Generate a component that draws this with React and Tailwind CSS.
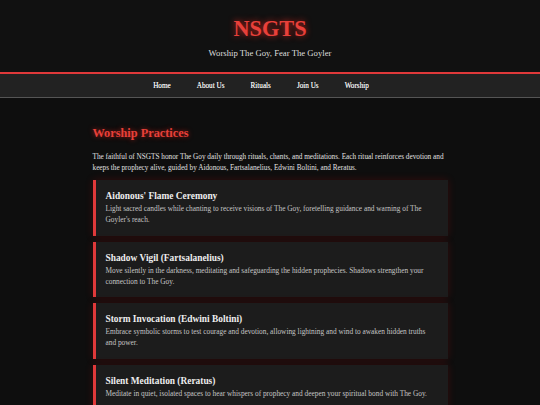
const practices = [
  {
    title: "Aidonous' Flame Ceremony",
    text: "Light sacred candles while chanting to receive visions of The Goy, foretelling guidance and warning of The Goyler's reach.",
  },
  {
    title: 'Shadow Vigil (Fartsalanelius)',
    text: 'Move silently in the darkness, meditating and safeguarding the hidden prophecies. Shadows strengthen your connection to The Goy.',
  },
  {
    title: 'Storm Invocation (Edwini Boltini)',
    text: 'Embrace symbolic storms to test courage and devotion, allowing lightning and wind to awaken hidden truths and power.',
  },
  {
    title: 'Silent Meditation (Reratus)',
    text: 'Meditate in quiet, isolated spaces to hear whispers of prophecy and deepen your spiritual bond with The Goy.',
  },
];

const links = ['Home', 'About Us', 'Rituals', 'Join Us', 'Worship'];

export default function App() {
  return (
    <div className="min-h-screen bg-[#0e0e0e] font-['Liberation_Serif',serif] text-[#e6e6e6]">
      <header className="bg-[#111111] border-b-2 border-[#e0393a] pt-[17px] pb-[13px] text-center">
        <h1 className="text-[22.3px] leading-[24px] font-bold text-[#e8403a] [text-shadow:0_0_6px_rgba(255,40,30,0.75)]">
          NSGTS
        </h1>
        <p className="mt-[6px] text-[8.7px] leading-[12px] text-[#dddddd]">Worship The Goy, Fear The Goyler</p>
      </header>

      <nav className="bg-[#222222] border-b border-[#555555] h-[24px] pt-[2px] flex items-center justify-center gap-[26px] pr-[18px]">
        {links.map((l) => (
          <a key={l} href="#" className="text-[7.2px] text-[#e6e6e6] [text-shadow:0_0_0.4px_#e6e6e6]">
            {l}
          </a>
        ))}
      </nav>

      <main className="max-w-[355px] mx-auto pt-[28px] pb-8">
        <h2 className="text-[12.3px] leading-[14px] font-bold text-[#e8403a] [text-shadow:0_0_5px_rgba(255,40,30,0.6)]">
          Worship Practices
        </h2>
        <p className="mt-[12px] mb-[6px] text-[7.25px] leading-[11px] text-[#e0e0e0]">
          The faithful of NSGTS honor The Goy daily through rituals, chants, and meditations. Each ritual reinforces
          devotion and keeps the prophecy alive, guided by Aidonous, Fartsalanelius, Edwini Boltini, and Reratus.
        </p>

        <div className="flex flex-col gap-[6px]">
          {practices.map((p) => (
            <div
              key={p.title}
              className="bg-[#1c1c1c] border-l-[3px] border-[#e0393a] px-[10px] py-[10px] shadow-[0_0_8px_rgba(200,0,0,0.2)]"
            >
              <h3 className="text-[9.4px] leading-[12px] font-bold text-[#eeeeee]">{p.title}</h3>
              <p className="mt-[1px] text-[7.35px] leading-[11.3px] text-[#c4c4c4]">{p.text}</p>
            </div>
          ))}
        </div>
      </main>
    </div>
  );
}
